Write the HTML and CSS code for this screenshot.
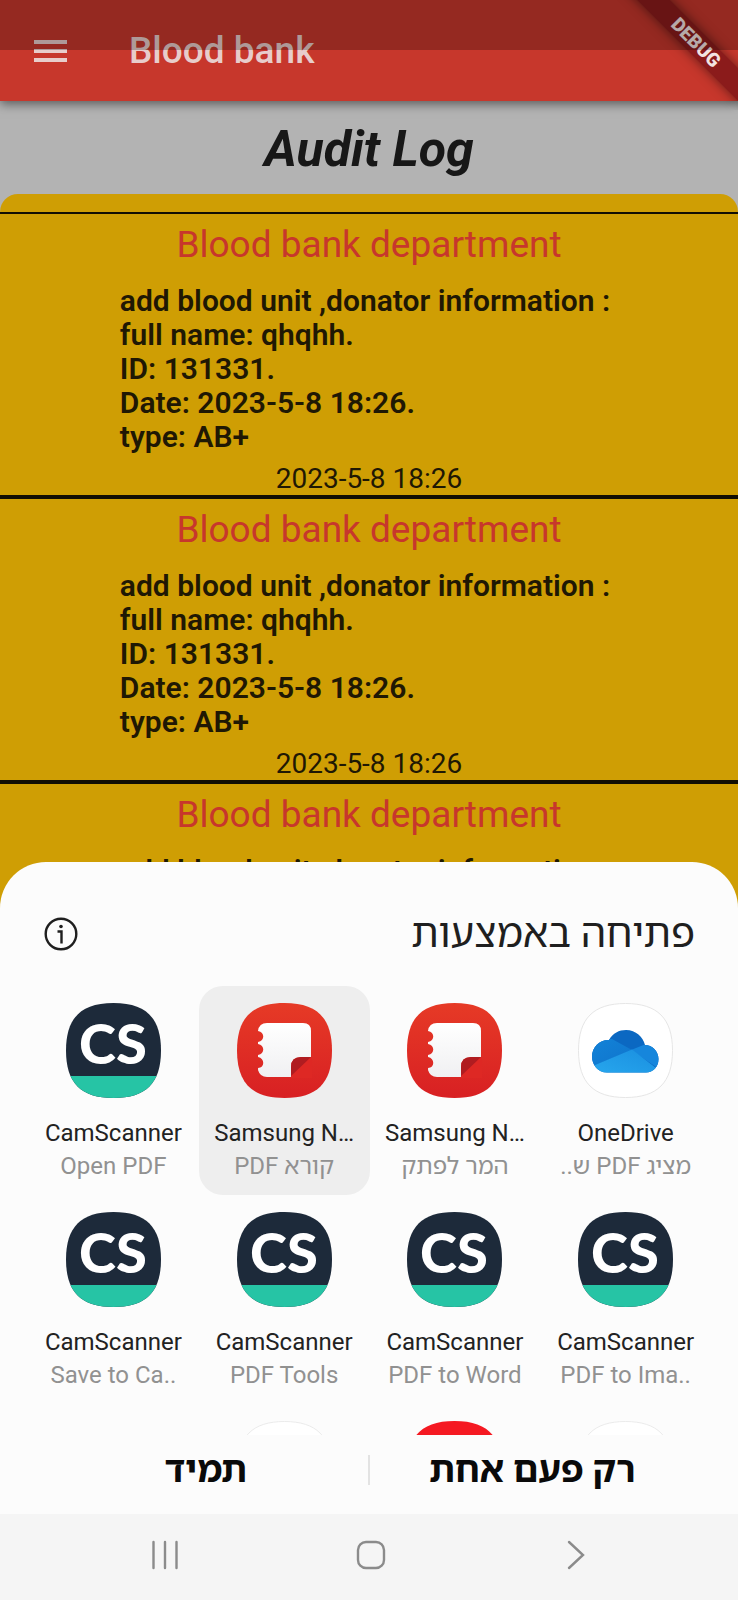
FILE: index.html
```html
<!DOCTYPE html>
<html lang="en">
<head>
<meta charset="utf-8">
<meta name="viewport" content="width=device-width, initial-scale=1">
<title>Blood bank</title>
<link rel="stylesheet" href="styles.css">
</head>
<body>
<svg class="defs" aria-hidden="true">
  <defs>
    <linearGradient id="notes-bg" x1="0" y1="0" x2="0" y2="1"><stop offset="0" stop-color="#e63a26"/><stop offset="1" stop-color="#d82023"/></linearGradient>
    <linearGradient id="notes-page" x1="0" y1="0" x2="0" y2="1"><stop offset="0" stop-color="#fff"/><stop offset="1" stop-color="#f0f0f2"/></linearGradient>
    <linearGradient id="cloud-front" x1="0" y1="1" x2="1" y2="0"><stop offset="0" stop-color="#28a8ee"/><stop offset="1" stop-color="#1a8fe0"/></linearGradient>
    <linearGradient id="cloud-left" x1="0" y1="0" x2="1" y2="1"><stop offset="0" stop-color="#1383d8"/><stop offset="1" stop-color="#0f74cc"/></linearGradient>
    <clipPath id="tile-clip"><path d="M47.500 0C80 0 95 15 95 47.500S80 95 47.500 95 0 80 0 47.500 15 0 47.500 0Z"/></clipPath>
    <clipPath id="cloud-clip"><path d="M29 69.500C20 69.500 14 62 14 53.500C14 44 22 36.500 31 37C35 30 41 27 48 27C58 27 65 34 67 42C74 42 80.500 48 80.500 56C80.500 64 75 69.500 68 69.500Z"/></clipPath>
    <symbol id="camscanner" viewBox="0 0 95 95">
      <g clip-path="url(#tile-clip)">
        <rect width="95" height="95" fill="#1d2a3a"/>
        <rect y="73" width="95" height="22" fill="#26c4a5"/>
      </g>
      <text x="47" y="61" class="cs-logo">CS</text>
    </symbol>
    <symbol id="notes" viewBox="0 0 95 95">
      <g clip-path="url(#tile-clip)"><rect width="95" height="95" fill="url(#notes-bg)"/></g>
      <path fill="url(#notes-page)" d="M30 20H66Q74 20 74 28V54L54 74H30Q23 74 21 67A5 5 0 0 0 21 65C28 65 28 55 21 54V52C28 51 28 42 21 41V39C28 38 28 29 21 28Q22 20 30 20Z"/>
      <path fill="#de2824" d="M54 75V64Q54 54 64 54H75V75Z"/>
      <path fill="#b01c20" d="M54 73V64Q54 54 64 54H74Z"/>
    </symbol>
    <symbol id="onedrive" viewBox="0 0 95 95">
      <path fill="#fff" stroke="#e6e6e6" d="M47.500 .5C79.500 .5 94.500 15.500 94.500 47.500S79.500 94.500 47.500 94.500 .5 79.500 .5 47.500 15.500 .5 47.500 .5Z"/>
      <g clip-path="url(#cloud-clip)">
        <rect x="12" y="25" width="72" height="46" fill="#0b68c2"/>
        <path fill="url(#cloud-left)" d="M10 36H34L54 47L12 64Z"/>
        <path fill="#1686dc" d="M53 47L68 41L84 38V68Z"/>
        <path fill="url(#cloud-front)" d="M12 64L54 46.500L78 65V72H12Z"/>
      </g>
    </symbol>
    <symbol id="blank" viewBox="0 0 95 95">
      <path fill="#fff" stroke="#ebebeb" d="M47.500 .5C79.500 .5 94.500 15.500 94.500 47.500S79.500 94.500 47.500 94.500 .5 79.500 .5 47.500 15.500 .5 47.500 .5Z"/>
    </symbol>
    <symbol id="red" viewBox="0 0 95 95">
      <g clip-path="url(#tile-clip)"><rect width="95" height="95" fill="#f51922"/></g>
    </symbol>
  </defs>
</svg>

<div class="screen">
  <header class="app-bar">
    <button class="menu" aria-label="Menu"><svg width="33" height="22" viewBox="0 0 33 22"><path fill="currentColor" d="M0 0H33V4H0ZM0 9H33V13H0ZM0 18H33V22H0Z"/></svg></button>
    <h1 class="app-title">Blood bank</h1>
    <div class="debug-corner"><span class="debug">DEBUG</span></div>
    <div class="status-shade"></div>
  </header>

  <main class="log">
    <h2 class="log-title">Audit Log</h2>
    <div class="log-top"></div>
    <article class="entry">
      <h3 class="dept">Blood bank department</h3>
      <p class="details">add blood unit ,donator information :<br>full name: qhqhh.<br>ID: 131331.<br>Date: 2023-5-8 18:26.<br>type: AB+</p>
      <time class="stamp">2023-5-8 18:26</time>
    </article>
    <article class="entry">
      <h3 class="dept">Blood bank department</h3>
      <p class="details">add blood unit ,donator information :<br>full name: qhqhh.<br>ID: 131331.<br>Date: 2023-5-8 18:26.<br>type: AB+</p>
      <time class="stamp">2023-5-8 18:26</time>
    </article>
    <article class="entry last">
      <h3 class="dept">Blood bank department</h3>
      <p class="details">add blood unit ,donator information :</p>
    </article>
  </main>

  <div class="overlay">
    <section class="sheet" dir="rtl" lang="he">
      <div class="sheet-head">
        <h2 class="sheet-title">פתיחה באמצעות</h2>
        <button class="info" aria-label="מידע"><svg width="34" height="34" viewBox="0 0 34 34" fill="none" stroke="currentColor" stroke-width="2.400"><circle cx="17" cy="17" r="15.300"/><path d="M13.500 14.500H17.500V26.500"/><circle cx="17" cy="9.500" r="1.800" fill="currentColor" stroke="none"/></svg></button>
      </div>
      <div class="apps">
        <button class="app"><svg class="icon"><use href="#onedrive"/></svg><span class="name" dir="ltr">OneDrive</span><span class="sub">מציג PDF ש..</span></button>
        <button class="app"><svg class="icon"><use href="#notes"/></svg><span class="name" dir="ltr">Samsung N…</span><span class="sub">המר לפתק</span></button>
        <button class="app selected"><svg class="icon"><use href="#notes"/></svg><span class="name" dir="ltr">Samsung N…</span><span class="sub">קורא PDF</span></button>
        <button class="app"><svg class="icon"><use href="#camscanner"/></svg><span class="name" dir="ltr">CamScanner</span><span class="sub" dir="ltr">Open PDF</span></button>
        <button class="app"><svg class="icon"><use href="#camscanner"/></svg><span class="name" dir="ltr">CamScanner</span><span class="sub" dir="ltr">PDF to Ima..</span></button>
        <button class="app"><svg class="icon"><use href="#camscanner"/></svg><span class="name" dir="ltr">CamScanner</span><span class="sub" dir="ltr">PDF to Word</span></button>
        <button class="app"><svg class="icon"><use href="#camscanner"/></svg><span class="name" dir="ltr">CamScanner</span><span class="sub" dir="ltr">PDF Tools</span></button>
        <button class="app"><svg class="icon"><use href="#camscanner"/></svg><span class="name" dir="ltr">CamScanner</span><span class="sub" dir="ltr">Save to Ca..</span></button>
        <div class="app"><svg class="icon"><use href="#blank"/></svg></div>
        <div class="app"><svg class="icon"><use href="#red"/></svg></div>
        <div class="app"><svg class="icon"><use href="#blank"/></svg></div>
      </div>
      <div class="actions">
        <button class="action">רק פעם אחת</button>
        <button class="action">תמיד</button>
      </div>
    </section>
    <nav class="nav-bar">
      <button class="nav" aria-label="Recent apps"><svg width="30" height="30" viewBox="0 0 30 30"><path d="M2.500 2V28M14 2V28M25.500 2V28"/></svg></button>
      <button class="nav" aria-label="Home"><svg width="30" height="30" viewBox="0 0 30 30"><rect x="2" y="2" width="26" height="26" rx="8"/></svg></button>
      <button class="nav" aria-label="Back"><svg width="30" height="30" viewBox="0 0 30 30"><path d="M8 2L22 15L8 28"/></svg></button>
    </nav>
  </div>
</div>
</body>
</html>
```
FILE: styles.css
```css
* {
  box-sizing: border-box;
  margin: 0;
}

body {
  font-family: Roboto, "Noto Sans Hebrew", "Noto Sans", "Open Sans", sans-serif;
  background: #b3b3b3;
}

button {
  border: 0;
  padding: 0;
  background: none;
  font: inherit;
  color: inherit;
}

svg {
  display: block;
}

.defs {
  position: absolute;
  width: 0;
  height: 0;
}

.screen {
  position: relative;
  min-height: 100vh;
  display: flex;
  flex-direction: column;
}

/* App bar */
.app-bar {
  position: relative;
  height: 101px;
  padding: 0 34px;
  display: flex;
  align-items: center;
  gap: 62px;
  background: #c7372c;
  color: #e8cdcb;
  box-shadow: 0 3px 10px rgba(0, 0, 0, 0.5);
}

.app-title {
  font-size: 37px;
  font-weight: 500;
  line-height: 44px;
}

.debug-corner {
  position: absolute;
  top: 0;
  right: 0;
  width: 130px;
  height: 110px;
  overflow: hidden;
}

.debug {
  position: absolute;
  top: 31px;
  right: -58px;
  width: 200px;
  text-align: center;
  font-size: 19px;
  font-weight: 900;
  line-height: 23px;
  color: #f3e3e2;
  background: #8b1b1b;
  box-shadow: 0 0 12px rgba(0, 0, 0, 0.5);
  transform: rotate(45deg);
}

.status-shade {
  position: absolute;
  inset: 0 0 auto;
  height: 50px;
  background: rgba(0, 0, 0, 0.25);
}

/* Audit log */
.log {
  flex: 1;
}

.log-title {
  padding: 19px 0 16px;
  text-align: center;
  font-size: 50px;
  font-style: italic;
  font-weight: 700;
  line-height: 58px;
  color: #171717;
}

.log-top {
  height: 18px;
  border-radius: 20px 20px 0 0;
  background: #cf9e04;
}

.entry {
  padding: 9px 0 0;
  display: flex;
  flex-direction: column;
  align-items: center;
  border: solid #120e04;
  border-width: 2px 0;
  background: #cf9e04;
  color: #1f1804;
}

.last {
  min-height: 285px;
}

.dept {
  margin-bottom: 17px;
  font-size: 37px;
  font-weight: 400;
  line-height: 44px;
  color: #c7372c;
}

.details {
  margin-bottom: 9px;
  padding-right: 8px;
  font-size: 30px;
  font-weight: 600;
  line-height: 34px;
}

.stamp {
  font-size: 28px;
  line-height: 32px;
}

/* Chooser sheet */
.overlay {
  position: absolute;
  inset: auto 0 0;
}

.sheet {
  padding: 0 27px 0 28px;
  border-radius: 46px 46px 0 0;
  background: #fcfcfc;
}

.sheet-head {
  padding: 46px 16px 26px;
  display: flex;
  justify-content: space-between;
  align-items: center;
  color: #1f1f1f;
}

.sheet-title {
  font-size: 40px;
  font-weight: 400;
  line-height: 52px;
}

.apps {
  display: grid;
  grid-template-columns: repeat(4, 1fr);
  grid-auto-rows: 209px;
  max-height: 449px;
  overflow: hidden;
}

.app {
  padding-top: 17px;
  display: flex;
  flex-direction: column;
  align-items: center;
  justify-content: flex-start;
  border-radius: 24px;
}

.selected {
  background: #eee;
}

.icon {
  width: 95px;
  height: 95px;
  margin-bottom: 19px;
}

.cs-logo {
  font-family: Lato, sans-serif;
  font-size: 56px;
  font-weight: 900;
  text-anchor: middle;
  fill: #fff;
}

.name {
  margin-bottom: 1px;
  font-size: 24px;
  line-height: 32px;
  color: #222;
}

.sub {
  font-size: 24px;
  line-height: 32px;
  color: #919191;
}

.actions {
  height: 79px;
  padding: 0 16px 10px;
  display: grid;
  grid-template-columns: 1fr 1fr;
  align-items: center;
}

.action {
  height: 30px;
  font-size: 36px;
  font-weight: 700;
  line-height: 30px;
  color: #0a0a0a;
}

.action + .action {
  border-right: 2px solid #e3e3e3;
}

/* System navigation */
.nav-bar {
  height: 86px;
  padding: 0 60px 4px 64px;
  display: grid;
  grid-template-columns: repeat(3, 1fr);
  align-items: center;
  justify-items: center;
  background: #f5f5f5;
  color: #8b8b8b;
}

.nav svg {
  fill: none;
  stroke: currentColor;
  stroke-width: 2.4;
  stroke-linecap: round;
}
```
